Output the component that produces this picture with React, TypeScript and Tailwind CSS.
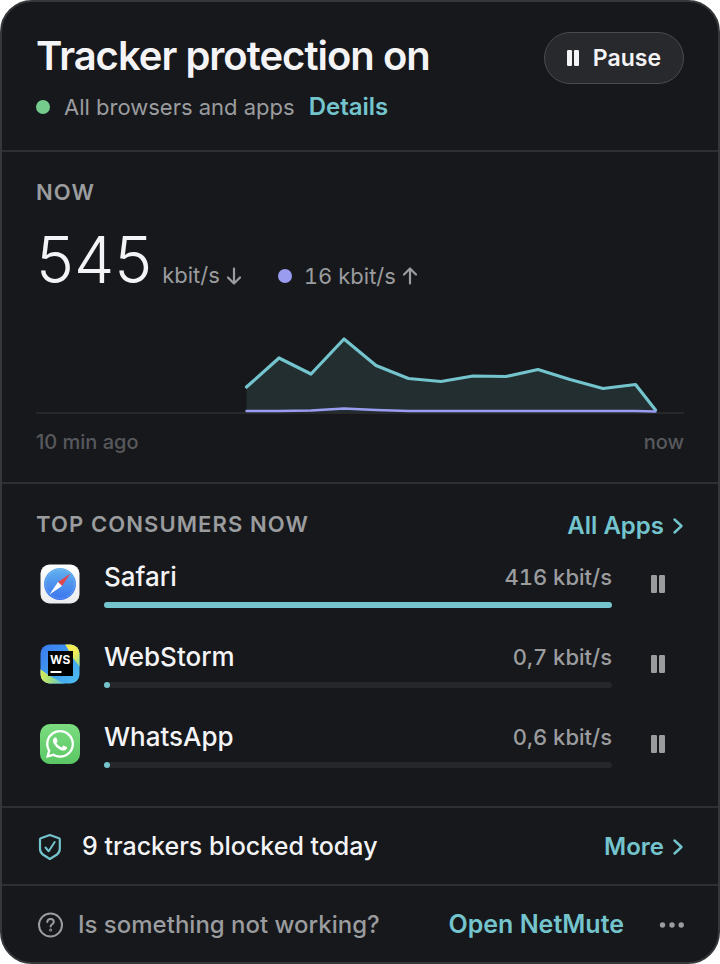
import React from 'react';
import { FaWhatsapp } from 'react-icons/fa';

const consumers = [
  { name: 'Safari', rate: '416 kbit/s', share: 100, icon: <SafariIcon /> },
  { name: 'WebStorm', rate: '0,7 kbit/s', share: 0, icon: <WebStormIcon /> },
  { name: 'WhatsApp', rate: '0,6 kbit/s', share: 0, icon: <WhatsAppIcon /> },
];

const download = '210.5,55 243,26 275,42 308,7 340,33.5 372.5,46.5 405,49.5 437,44 470,44.5 502,37.5 534,47.5 567,56.5 599.5,52.5 619.5,78';
const upload = '210.5,79 243,79 275,78.5 308,76.5 340,78 372.5,79 599.5,79 619.5,79.5';

function SafariIcon() {
  return <svg viewBox="0 0 40 40" className="h-10 w-10" aria-hidden="true">
      <defs>
        <linearGradient id="safari-plate" x1="0" y1="0" x2="0" y2="1">
          <stop offset="0" stopColor="#ffffff" />
          <stop offset="1" stopColor="#ececee" />
        </linearGradient>
        <linearGradient id="safari-dial" x1="0" y1="0" x2="0" y2="1">
          <stop offset="0" stopColor="#62b2ee" />
          <stop offset="1" stopColor="#3a74ee" />
        </linearGradient>
      </defs>
      <rect x="0.5" y="0.5" width="39" height="39" rx="9" fill="url(#safari-plate)" />
      <circle cx="20" cy="20" r="16" fill="url(#safari-dial)" />
      <circle cx="20" cy="20" r="14.3" fill="none" stroke="#c8e2ff" strokeOpacity="0.5" strokeWidth="1.4" strokeDasharray="0.5 1.3" />
      <path d="M30.5 9.5 18 18l4 4z" fill="#e0474f" />
      <path d="M9.5 30.500 18 18l4 4z" fill="#ffffff" />
    </svg>;
}

function WebStormIcon() {
  return <svg viewBox="0 0 40 40" className="h-10 w-10" aria-hidden="true">
      <defs>
        <clipPath id="ws-clip">
          <rect x="0.5" y="0.5" width="39" height="39" rx="9" />
        </clipPath>
        <linearGradient id="ws-blue" x1="0" y1="0" x2="1" y2="1">
          <stop offset="0" stopColor="#3a78ee" />
          <stop offset="0.5" stopColor="#3f9cf0" />
          <stop offset="1" stopColor="#4fbff0" />
        </linearGradient>
        <linearGradient id="ws-yellow" x1="0" y1="0" x2="0.6" y2="1">
          <stop offset="0" stopColor="#f6ee4c" />
          <stop offset="0.6" stopColor="#f0ec5c" />
          <stop offset="1" stopColor="#b4e27c" />
        </linearGradient>
        <linearGradient id="ws-green" x1="0" y1="0" x2="1" y2="0">
          <stop offset="0" stopColor="#dcea5c" />
          <stop offset="0.4" stopColor="#a4df7c" />
          <stop offset="1" stopColor="#4fbff0" />
        </linearGradient>
      </defs>
      <g clipPath="url(#ws-clip)">
        <rect width="40" height="40" fill="url(#ws-blue)" />
        <path d="M25 0h15v23l-7-9z" fill="url(#ws-yellow)" />
        <path d="M0 25l10 7 15 8H0z" fill="url(#ws-green)" />
      </g>
      <rect x="8" y="7" width="25" height="25" fill="#000000" />
      <text x="10" y="20" fontSize="12" className="fill-white font-['Inter'] font-bold">WS</text>
      <rect x="10.5" y="27" width="11" height="2" fill="#ffffff" />
    </svg>;
}

function WhatsAppIcon() {
  return <span className="flex h-10 w-10 items-center justify-center rounded-[10px] bg-linear-to-b from-[#7bdc80] to-[#5ac764] text-white">
      <FaWhatsapp className="h-8 w-8" aria-hidden="true" />
    </span>;
}

function Chevron() {
  return <svg viewBox="0 0 12 18" className="h-[18px] w-3" fill="none" stroke="currentColor" strokeWidth="2.4" strokeLinecap="round" strokeLinejoin="round" aria-hidden="true">
      <path d="M2.500 2.500 9.500 9l-7 6.500" />
    </svg>;
}

function Arrow({ up = false }) {
  return <svg viewBox="0 0 16 18" className="h-[18px] w-4" fill="none" stroke="currentColor" strokeWidth="2.2" strokeLinecap="round" strokeLinejoin="round" aria-hidden="true">
      {up ? <path d="M8 16.5V1.5M2 7.5l6-6 6 6" /> : <path d="M8 1.5v15M2 10.5l6 6 6-6" />}
    </svg>;
}

const App = () => {
  return <div className="bg-white">
      <main className="overflow-hidden rounded-[32px] border-2 border-[#35373b] bg-[#16181c] font-['Inter',sans-serif] text-[#f4f4f6]">
        {/* Header */}
        <header className="border-b-2 border-[#2d2f33] px-[34px] pt-[30px] pb-7">
          <div className="flex items-start justify-between">
            <h1 className="text-[40px] leading-12 font-semibold tracking-tight">
              Tracker protection on
            </h1>
            <button type="button" className="flex h-[52px] items-center gap-3.5 rounded-full border border-[#4a4b4e] bg-[#28292c] px-[22px] text-[23px] font-semibold">
              <svg viewBox="0 0 12 16" className="h-4 w-3" fill="currentColor" aria-hidden="true">
                <rect width="5" height="16" rx="1.2" />
                <rect x="7" width="5" height="16" rx="1.2" />
              </svg>
              Pause
            </button>
          </div>
          <div className="mt-2 flex items-center text-[22px] leading-[30px]">
            <span className="mr-3.5 h-3.5 w-3.5 rounded-full bg-[#74cb8b]" />
            <span className="text-[#9b9c9e]">All browsers and apps</span>
            <a href="#details" className="ml-3.5 text-2xl leading-[30px] font-semibold text-[#74c4cd]">
              Details
            </a>
          </div>
        </header>
        {/* Current traffic */}
        <section className="border-b-2 border-[#2d2f33] px-[34px] py-7">
          <h2 className="text-[22px] leading-6 font-semibold tracking-wider text-[#9b9c9e]">
            NOW
          </h2>
          <div className="mt-6 flex h-16 items-baseline text-[22px] text-[#9b9c9e]">
            <span className="text-[64px] leading-16 font-light text-[#f4f4f6]">545</span>
            <span className="ml-2.5 flex items-center gap-1.5">kbit/s <Arrow /></span>
            <span className="ml-9 flex items-center">
              <span className="mr-3 h-3.5 w-3.5 rounded-full bg-[#9a9cf0]" />
              <span className="mr-1.5 tabular-nums">16 kbit/s</span>
              <Arrow up />
            </span>
          </div>
          <svg viewBox="0 0 648 82" className="mt-10 w-full" fill="none" role="img" aria-label="Traffic over the last 10 minutes">
            <rect y="80" width="648" height="2" fill="#26282c" />
            <polygon points={`${download} 619.5,80 210.5,80`} fill="#222e30" />
            <polyline points={download} stroke="#74c4cd" strokeWidth="3.2" strokeLinecap="round" strokeLinejoin="round" />
            <polyline points={upload} stroke="#9a9cf0" strokeWidth="2.4" strokeLinecap="round" strokeLinejoin="round" />
          </svg>
          <div className="mt-4 flex justify-between text-xl leading-6 font-medium text-[#58595c]">
            <span>10 min ago</span>
            <span>now</span>
          </div>
        </section>
        {/* Top consumers */}
        <section className="border-b-2 border-[#2d2f33] px-[34px] pt-7 pb-[22px]">
          <div className="flex items-start justify-between">
            <h2 className="text-[22px] leading-6 font-semibold tracking-wider text-[#9b9c9e]">
              TOP CONSUMERS NOW
            </h2>
            <a href="#apps" className="flex items-center gap-2 text-2xl leading-7 font-semibold text-[#74c4cd]">
              All Apps
              <Chevron />
            </a>
          </div>
          <ul className="mt-1">
            {consumers.map(app => <li key={app.name} className="flex h-20 items-center pl-1">
                {app.icon}
                <div className="ml-6 flex-1">
                  <div className="flex items-center justify-between leading-[34px]">
                    <span className="text-[26px] font-medium">{app.name}</span>
                    <span className="text-[22px] font-medium text-[#9b9c9e] tabular-nums">{app.rate}</span>
                  </div>
                  <div className="mt-2 h-1.5 rounded-full bg-[#26272a]">
                    <div className="h-1.5 min-w-1.5 rounded-full bg-[#74c4cd]" style={{ width: `${app.share}%` }} />
                  </div>
                </div>
                <button type="button" aria-label={`Pause ${app.name}`} className="ml-5 flex h-10 w-[52px] items-center justify-center text-[#9b9c9e]">
                  <svg viewBox="0 0 14 18" className="h-[18px] w-3.5" fill="currentColor" aria-hidden="true">
                    <rect width="6" height="18" rx="1.2" />
                    <rect x="8" width="6" height="18" rx="1.2" />
                  </svg>
                </button>
              </li>)}
          </ul>
        </section>
        {/* Blocked trackers */}
        <section className="flex h-[78px] items-center border-b-2 border-[#2d2f33] px-[34px] pt-0.5">
          <svg viewBox="0 0 28 28" className="h-7 w-7 text-[#74c4cd]" fill="none" stroke="currentColor" strokeWidth="2.2" strokeLinecap="round" strokeLinejoin="round" aria-hidden="true">
            <path d="M13.900 2 23 5.200a1.200 1.200 0 0 1 .8 1.100V15.500c0 2.800-.8 4.500-2.800 6L13.900 26l-7.100-4.500c-2-1.500-2.800-3.200-2.800-6V6.300a1.200 1.200 0 0 1 .8-1.100z" />
            <path d="m9.500 14.500 3.200 3.800 6-9.300" strokeWidth="2" />
          </svg>
          <span className="ml-[18px] flex-1 text-[25px] font-medium">9 trackers blocked today</span>
          <a href="#trackers" className="flex items-center gap-2 text-2xl font-semibold text-[#74c4cd]">
            More
            <Chevron />
          </a>
        </section>
        {/* Footer */}
        <footer className="flex h-[76px] items-center px-[34px] pt-0.5">
          <svg viewBox="0 0 28 28" className="h-7 w-7 text-[#9b9c9e]" fill="none" stroke="currentColor" strokeWidth="2" strokeLinecap="round" strokeLinejoin="round" aria-hidden="true">
            <circle cx="14.500" cy="14" r="11.500" />
            <path d="M11.300 11c.1-1.900 1.400-3 3.300-3 1.800 0 3.200 1.100 3.200 2.800 0 2.400-3.200 2.400-3.200 4.700" />
            <circle cx="14.600" cy="19.100" r="0.500" />
          </svg>
          <a href="#help" className="ml-3.5 flex-1 text-2xl font-medium text-[#9b9c9e]">
            Is something not working?
          </a>
          <button type="button" className="text-[25px] font-semibold text-[#74c4cd]">
            Open NetMute
          </button>
          <button type="button" aria-label="More options" className="ml-8 text-[#9b9c9e]">
            <svg viewBox="0 0 28 8" className="h-2 w-7" fill="currentColor" aria-hidden="true">
              <circle cx="6.500" cy="4" r="2.700" />
              <circle cx="16" cy="4" r="2.700" />
              <circle cx="25.200" cy="4" r="2.700" />
            </svg>
          </button>
        </footer>
      </main>
    </div>;
};
export default App;
